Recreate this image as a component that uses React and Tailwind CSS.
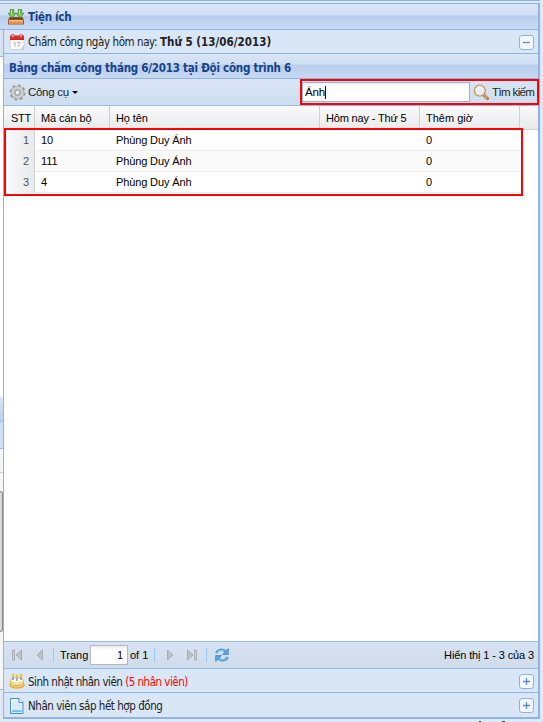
import React from "react";

const rows = [
  { id: 1, code: "10", name: "Phùng Duy Ánh", extra: "0" },
  { id: 2, code: "111", name: "Phùng Duy Ánh", extra: "0" },
  { id: 3, code: "4", name: "Phùng Duy Ánh", extra: "0" },
];

const tahoma = "font-['DejaVu_Sans_Condensed','DejaVu_Sans',sans-serif] [font-stretch:condensed]";
const arial = "font-['Liberation_Sans',Arial,sans-serif]";

function CrateIcon() {
  return (
    <svg width="16" height="16" viewBox="0 0 16 16" className="block shrink-0">
      <path d="M1.500 8h13L16 10.500v5H0v-5z" fill="#a65a28" />
      <path d="M2.500 8.500h11l.8 1.700H1.700z" fill="#6b3c1b" />
      <path d="M1 11h14v3.800H1z" fill="#e59a5c" />
      <path d="M1 11h14v1.200H1z" fill="#f6c193" />
      <path d="M2.300.500h3.400v3.700H8L4 9 0 4.200h2.300zM10.300.500h3.400v3.700H16L12 9 8 4.200h2.300z" fill="#75bd51" stroke="#4a9638" strokeWidth=".8" />
      <path d="M3.500 1.500v4l1.200 1M11.500 1.500v4l1.200 1" stroke="#b5dfa0" fill="none" strokeWidth="1" />
    </svg>
  );
}

function CalendarIcon() {
  return (
    <svg width="16" height="16" viewBox="0 0 16 16" className="block shrink-0">
      <rect x="1" y="2" width="14" height="13.500" rx="1" fill="#fbfbfb" stroke="#c5c9ce" strokeWidth=".8" />
      <path d="M1 1.500h14V6H1z" fill="#e22c2a" />
      <path d="M1 5h14v1H1z" fill="#c22323" />
      <path d="M3 0h1.800v3.500H3zM11.200 0H13v3.500h-1.800z" fill="#f7eaea" stroke="#b52e2e" strokeWidth=".7" />
      <path d="M4.500 9L6 8v5M8 8.500h3L9 13" fill="none" stroke="#adb0b4" strokeWidth=".9" />
      <path d="M11 15.500l4-4v4z" fill="#c8cbd0" />
    </svg>
  );
}

function GearIcon() {
  return (
    <svg width="17" height="17" viewBox="0 0 17 17" className="block shrink-0">
      <circle cx="8.500" cy="8.500" r="6.800" fill="none" stroke="#96989a" strokeWidth="2.400" strokeDasharray="2.900 2.440" />
      <circle cx="8.500" cy="8.500" r="4.500" fill="none" stroke="#999b9d" strokeWidth="4.200" />
      <circle cx="8.500" cy="8.500" r="4.700" fill="none" stroke="#cdcfd0" strokeWidth="2.900" />
      <circle cx="8.500" cy="8.500" r="2.300" fill="#eef3fa" stroke="#999b9d" strokeWidth=".8" />
    </svg>
  );
}

function SearchIcon() {
  return (
    <svg width="17" height="17" viewBox="0 0 17 17" className="block shrink-0">
      <path d="M10.800 11.200l3.700 3.300" stroke="#a96729" strokeWidth="3" strokeLinecap="round" />
      <path d="M11 11.200l3.200 2.800" stroke="#e2ac69" strokeWidth="1.300" strokeLinecap="round" />
      <circle cx="6.800" cy="6.600" r="5.500" fill="#e5eef9" stroke="#cf9859" strokeWidth="1.400" />
      <path d="M3.500 6Q4 3.500 6.700 3.300" fill="none" stroke="#fff" strokeWidth="1.200" />
    </svg>
  );
}

function CakeIcon() {
  return (
    <svg width="16" height="16" viewBox="0 0 16 16" className="block shrink-0">
      <ellipse cx="8" cy="12.300" rx="7.800" ry="3.400" fill="#f2b22b" />
      <path d="M1.500 7.500v3.700c0 4 13 4 13 0V7.500z" fill="#fff0bd" stroke="#e5a92b" strokeWidth=".7" />
      <ellipse cx="8" cy="7.500" rx="6.500" ry="2.600" fill="#fffbea" stroke="#f0bd43" strokeWidth=".8" />
      <path d="M1.700 10.300q3 2.400 6.300 2.400t6.300-2.400" fill="none" stroke="#d28a50" strokeWidth=".9" />
      <path d="M4 3.500V7M8 4.500V8M12 3.500V7" stroke="#7d91c9" strokeWidth="1.400" />
      <path d="M4 .2l1.500 2.300Q4 5 2.500 2.500zM8 1l1.500 2.300Q8 6 6.500 3.300zM12 .2l1.500 2.300Q12 5 10.500 2.500z" fill="#f6c41e" />
    </svg>
  );
}

function PageIcon() {
  return (
    <svg width="16" height="16" viewBox="0 0 16 16" className="block shrink-0">
      <path d="M1.500.500h8.500l4 4v11H1.500z" fill="#d8ebfd" stroke="#4b8fce" />
      <path d="M10 .500v4h4" fill="#fff" stroke="#4b8fce" />
      <path d="M2.700 2H9M2.700 1.500v10.800" stroke="#fff" strokeWidth="1" fill="none" />
      <path d="M3 12.300h9.800v1.500H3z" fill="#55b6ef" />
    </svg>
  );
}

function RefreshIcon() {
  return (
    <svg width="16" height="16" viewBox="0 0 16 16" className="block shrink-0">
      <path d="M2.400 6C3.800 2.600 8.200 1.600 11.300 4.200" fill="none" stroke="#3b86c9" strokeWidth="2.500" />
      <path d="M14.300 1.600v5.800H8.500z" fill="#5ba9e3" stroke="#3479bd" strokeWidth=".7" />
      <path d="M13.600 10c-1.400 3.400-5.800 4.400-8.900 1.800" fill="none" stroke="#3b86c9" strokeWidth="2.500" />
      <path d="M1.700 14.400V8.600h5.800z" fill="#5ba9e3" stroke="#3479bd" strokeWidth=".7" />
      <path d="M2.800 5.700C4.500 2.900 8.200 2.300 10.800 4.300M13.200 10.300c-1.700 2.800-5.400 3.400-8 1.400" fill="none" stroke="#8bcbf5" strokeWidth="1.200" />
    </svg>
  );
}

function PagerArrow({ flip, bar }) {
  return (
    <svg width="12" height="12" viewBox="0 0 12 12" className={flip ? "block shrink-0 -scale-x-100" : "block shrink-0"}>
      <path d="M1.500 1v10l5.500-5z" fill="#bcc1c7" stroke="#a0a5ac" strokeWidth=".8" />
      {bar && <path d="M8.500 1h2v10h-2z" fill="#ccd0d5" stroke="#9ca1a8" strokeWidth=".7" />}
    </svg>
  );
}

function Toggle({ open }) {
  return (
    <div className="flex h-[15px] w-[15px] items-center justify-center rounded-[3px] border border-[#8db2e3] bg-[#f3f8fe]">
      <svg width="9" height="9" viewBox="0 0 9 9">
        <path d={open ? "M1 4.500h7" : "M1 4.500h7M4.500 1v7"} stroke="#5b8cc4" strokeWidth="1.300" />
      </svg>
    </div>
  );
}

function LeftStrip() {
  return (
    <div className="flex w-[3px] shrink-0 flex-col">
      <div className="h-[27px] border-b border-[#99bbe8] bg-[#d7e4f5]" />
      <div className="h-[340px] bg-white" />
      <div className="h-[25px] border-b border-[#99bbe8] bg-linear-to-b from-[#dce8f7] to-[#b8cfee]" />
      <div className="h-[27px] border-b border-[#99bbe8] bg-[#cfdef2]" />
      <div className="h-[24px] border-b border-[#d0d0d0] bg-[#f4f5f6]" />
      <div className="h-[18px] bg-[#f7f7f7]" />
      <div className="h-[141px] rounded-r-sm border-y border-r border-[#888] bg-[#d8d8d8]" />
      <div className="h-[58px] border-b border-[#99bbe8] bg-[#f5f6f8]" />
      <div className="flex-1 bg-[#dfe8f6]" />
    </div>
  );
}

export default function App() {
  return (
    <div className="relative flex h-[722px] w-[543px] flex-col overflow-hidden bg-[#dfe8f6] text-[11px] leading-[14px] text-[#222]">
      <div className="h-[4px] w-[540px] shrink-0 border-y border-[#8fb3e4] bg-[#dfe9f7]" />
      <header className="flex h-[26px] w-[540px] shrink-0 items-center border-r-2 border-b border-[#8fb3e4] bg-[linear-gradient(#d9e6f6_0px,#cfdef3_11px,#b7cdeb_12px,#c8dbf5_25px)] pt-px pl-2">
        <CrateIcon />
        <span className={`${tahoma} ml-1 text-[11.5px] font-bold tracking-[-0.3px] text-[#15428b]`}>Tiện ích</span>
      </header>
      <div className="flex min-h-0 flex-1">
        <LeftStrip />
        <main className="flex h-[689px] w-[537px] flex-col border-r-2 border-b-2 border-l border-[#8fb3e4]">
          <div className="flex h-[24px] shrink-0 items-center border-b border-[#8fb3e4] bg-[#d9e6f6] pt-px pr-[4px] pl-[5px]">
            <CalendarIcon />
            <span className={`${tahoma} ml-[3px] whitespace-nowrap text-[11.5px] text-[#222]`}>
              <span className="tracking-[-0.42px]">Chấm công ngày hôm nay: </span>
              <b className="tracking-[0.03px]">Thứ 5 (13/06/2013)</b>
            </span>
            <div className="ml-auto"><Toggle open /></div>
          </div>
          <div className="flex h-[25px] shrink-0 items-center border-b border-[#8fb3e4] bg-[linear-gradient(#dae6f5_0px,#cfdef2_10px,#b8cdea_11px,#c6daf4_24px)] pt-[3px] pl-[5px]">
            <span className={`${tahoma} text-[11.5px] font-bold tracking-[-0.24px] whitespace-nowrap text-[#15428b]`}>Bảng chấm công tháng 6/2013 tại Đội công trình 6</span>
          </div>
          <div className="flex h-[27px] shrink-0 items-center border-b border-[#99bbe8] bg-linear-to-b from-[#d9e5f4] to-[#cedeef] pl-[5px]">
            <GearIcon />
            <span className={`${arial} ml-[2px] text-[11.5px] tracking-[-0.3px]`}>Công cụ</span>
            <span className="ml-[3px] border-x-[3px] border-t-[3px] border-x-transparent border-t-black" />
            <div className="-mr-[1px] ml-auto flex h-[26px] w-[239px] items-center border-2 border-[#f00]">
              <div className={`${arial} flex h-[20px] w-[168px] items-center border border-[#8fb3e4] bg-[linear-gradient(#edf0f2,#fff_4px)] pl-[2px] text-[11.5px] tracking-[-0.1px] text-black`}>
                Ánh<span className="h-[13px] w-px bg-black" />
              </div>
              <div className="ml-[3px]"><SearchIcon /></div>
              <span className={`${arial} ml-[2px] whitespace-nowrap text-[11.5px] tracking-[-0.62px]`}>Tìm kiếm</span>
            </div>
          </div>
          <section className={`${arial} relative min-h-0 flex-1 bg-white text-[11px] text-black`}>
            <div className="grid h-[24px] grid-cols-[31px_75px_210px_100px_100px_1fr] border-b border-[#d0d0d0] bg-linear-to-b from-[#fafafa] to-[#e9eaec] leading-[24px] whitespace-nowrap">
              <div className="border-r border-[#d0d0d0] pl-[7px] tracking-[-0.3px]">STT</div>
              <div className="border-r border-[#d0d0d0] pl-[6px] tracking-[-0.1px]">Mã cán bộ</div>
              <div className="border-r border-[#d0d0d0] pl-[6px] tracking-[-0.1px]">Họ tên</div>
              <div className="border-r border-[#d0d0d0] pl-[6px] tracking-[-0.17px]">Hôm nay - Thứ 5</div>
              <div className="border-r border-[#d0d0d0] pl-[6px]">Thêm giờ</div>
              <div />
            </div>
            {rows.map((row) => (
              <div key={row.id} className="grid h-[21px] w-[516px] grid-cols-[31px_75px_210px_100px_100px] border-b border-[#ededed] leading-[21px] even:bg-white odd:bg-[#fafafa]">
                <div className="border-r border-[#d2d2d2] bg-linear-to-r from-[#fafafa] to-[#e8eaed] pr-[5px] text-right text-[#555]">{row.id}</div>
                <div className="pl-[6px]">{row.code}</div>
                <div className="pl-[6px] tracking-[-0.13px]">{row.name}</div>
                <div />
                <div className="pl-[6px]">{row.extra}</div>
              </div>
            ))}
            <div className="absolute top-[22px] left-0 h-[68px] w-[519px] border-2 border-[#f00]" />
          </section>
          <div className={`${arial} flex h-[28px] shrink-0 items-center border-y border-[#99bbe8] bg-linear-to-b from-[#d7e3f2] to-[#cfdcec] pl-[7px] text-[11px] whitespace-nowrap text-black`}>
            <PagerArrow flip bar />
            <div className="ml-[9px]"><PagerArrow flip /></div>
            <span className="ml-[9px] h-[14px] w-px bg-[#98c8ff]" />
            <span className="ml-[6px] w-[28px]">Trang</span>
            <div className="ml-[2px] flex h-[20px] w-[38px] items-center justify-end border border-[#b5b8c8] bg-[linear-gradient(#e9ecef,#fff_4px)] pr-[4px]">1</div>
            <span className="ml-[2px] w-[18px]">of 1</span>
            <span className="ml-[6px] h-[14px] w-px bg-[#98c8ff]" />
            <div className="ml-[11px]"><PagerArrow /></div>
            <div className="ml-[8px]"><PagerArrow bar /></div>
            <span className="ml-[8px] h-[14px] w-px bg-[#98c8ff]" />
            <div className="ml-[7px]"><RefreshIcon /></div>
            <span className="mr-[4px] ml-auto tracking-[-0.12px]">Hiển thị 1 - 3 của 3</span>
          </div>
          <div className="flex h-[24px] shrink-0 items-center border-b border-[#8fb3e4] bg-[#d9e6f6] pt-px pr-[4px] pl-[5px]">
            <CakeIcon />
            <span className={`${tahoma} ml-[3px] pt-px text-[11.5px] tracking-[-0.5px] whitespace-nowrap`}>Sinh nhật nhân viên <span className="text-[#f00]">(5 nhân viên)</span></span>
            <div className="ml-auto"><Toggle /></div>
          </div>
          <div className="flex h-[24px] shrink-0 items-center bg-[#d9e6f6] pt-px pr-[4px] pl-[5px]">
            <PageIcon />
            <span className={`${tahoma} ml-[3px] pt-px text-[11.5px] tracking-[-0.46px] whitespace-nowrap`}>Nhân viên sắp hết hợp đồng</span>
            <div className="ml-auto"><Toggle /></div>
          </div>
        </main>
      </div>
      {/* Top edge of the content that continues below the panel */}
      <div className="absolute bottom-0 left-[479px] flex h-px gap-[21px]">
        <i className="w-[2px] bg-[#444]" />
        <i className="w-[3px] bg-[#444]" />
      </div>
    </div>
  );
}
